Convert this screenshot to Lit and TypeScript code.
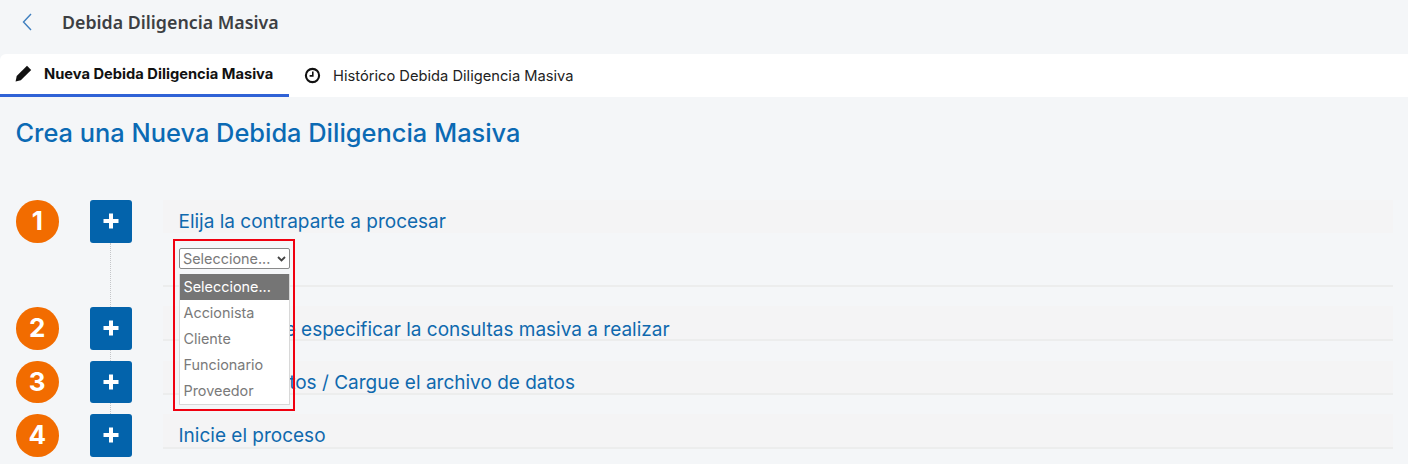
import { LitElement, html, css } from "lit";
import { customElement } from "lit/decorators.js";

const OPTIONS = ["Seleccione...", "Accionista", "Cliente", "Funcionario", "Proveedor"];

const STEPS = [
  { n: 1, title: "Elija la contraparte a procesar" },
  { n: 2, title: "Elija y detalle especificar la consultas masiva a realizar" },
  { n: 3, title: "Digite los datos / Cargue el archivo de datos" },
  { n: 4, title: "Inicie el proceso" },
];

@customElement("app-root")
export class AppRoot extends LitElement {
  static override styles = css`
    :host {
      display: block;
      width: 1408px;
      height: 464px;
      overflow: hidden;
      background: #f4f6f8;
      font-family: Inter, "Liberation Sans", sans-serif;
    }

    .topbar {
      display: flex;
      align-items: center;
      height: 54px;
      padding: 0 0 10px 21px;
      box-sizing: border-box;
    }

    .back {
      display: block;
      width: 12px;
      height: 20px;
      margin-right: 29px;
    }

    .page-title {
      font-family: "Noto Sans", sans-serif;
      font-size: 17.8px;
      font-weight: 600;
      color: #3d3f43;
    }

    .tabs {
      display: flex;
      height: 43px;
      background: #fff;
      border-top-left-radius: 6px;
    }

    .tab {
      display: flex;
      align-items: center;
      box-sizing: border-box;
      height: 43px;
      font-size: 14.7px;
      color: #222;
    }

    .tab.active {
      width: 289px;
      padding: 0 0 1px 15px;
      border-bottom: 3px solid #2f62d6;
      font-weight: 700;
      color: #111;
    }

    .tab.other {
      padding-left: 15px;
    }

    .tab svg {
      display: block;
      width: 17px;
      height: 17px;
      margin-right: 12px;
    }

    h1 {
      margin: 0;
      height: 103px;
      padding: 21px 0 0 15.5px;
      box-sizing: border-box;
      font-size: 25.4px;
      line-height: 29px;
      font-weight: 500;
      color: #0b6ab4;
    }

    .steps {
      display: flex;
      flex-direction: column;
      padding: 0 15px 0 16px;
    }

    .step {
      display: flex;
    }

    .step.s1 {
      height: 107px;
    }

    .step.s2,
    .step.s3 {
      height: 53.5px;
    }

    .num {
      flex: none;
      width: 42.5px;
      height: 42.5px;
      margin-right: 31px;
      border-radius: 50%;
      background: #f26c00;
      color: #fff;
      font-size: 26px;
      font-weight: 700;
      line-height: 42.5px;
      text-align: center;
    }

    .rail {
      flex: none;
      display: flex;
      flex-direction: column;
      align-items: center;
      width: 42.5px;
      margin-right: 31px;
    }

    .plus {
      flex: none;
      display: flex;
      align-items: center;
      justify-content: center;
      width: 42.5px;
      height: 42.5px;
      border-radius: 3px;
      background: #0363ab;
    }

    .plus svg {
      display: block;
      width: 18px;
      height: 18px;
    }

    .line {
      flex: 1;
      border-left: 1.5px dotted #c4c6c9;
    }

    .panel {
      flex: 1;
      align-self: flex-start;
      border-bottom: 2px solid #eceded;
    }

    .s1 .panel {
      height: 85px;
    }

    .s2 .panel {
      margin-top: -1px;
    }

    .head {
      box-sizing: border-box;
      height: 32.5px;
      padding: 10px 0 0 15.5px;
      background: #f4f4f5;
      font-size: 19px;
      line-height: 24px;
      color: #0f69ae;
      white-space: nowrap;
    }

    .s1 .head {
      height: 33px;
    }

    .s2 .head {
      padding-top: 11.5px;
    }

    .body {
      position: relative;
      height: 52px;
    }

    .select {
      position: absolute;
      left: 15.5px;
      top: 15px;
      display: flex;
      align-items: center;
      justify-content: space-between;
      box-sizing: border-box;
      width: 111px;
      height: 21px;
      padding: 0 3px 0 3.5px;
      border: 1px solid #8a8a8a;
      border-radius: 2px;
      background: #fff;
      font-size: 14.4px;
      color: #7a7a7a;
    }

    .select svg {
      display: block;
      width: 9px;
      height: 6px;
    }

    .list {
      position: absolute;
      left: 16px;
      top: 41px;
      z-index: 2;
      box-sizing: border-box;
      width: 111px;
      height: 131px;
      background: #fff;
      border: 1px solid #d8d8d8;
      border-top: none;
      font-size: 14.4px;
      color: #7a7a7a;
    }

    .option {
      height: 26px;
      padding-left: 3.5px;
      line-height: 26px;
    }

    .option.selected {
      background: #757575;
      color: #fff;
    }

    .mark {
      position: absolute;
      left: 9.7px;
      top: 6px;
      z-index: 3;
      box-sizing: border-box;
      width: 122px;
      height: 172px;
      border: 2px solid #f0000f;
      pointer-events: none;
    }
  `;

  private _renderPanelBody() {
    return html`
      <div class="body">
        <div class="select">
          <span>Seleccione...</span>
          <svg viewBox="0 0 9 6" fill="none" stroke="#444" stroke-width="1.8">
            <path d="M1 1l3.500 3.500L8 1" />
          </svg>
        </div>
        <div class="list">
          ${OPTIONS.map(
            (o, i) => html`<div class="option ${i === 0 ? "selected" : ""}">${o}</div>`,
          )}
        </div>
        <div class="mark"></div>
      </div>
    `;
  }

  override render() {
    return html`
      <div class="topbar">
        <svg class="back" viewBox="0 0 12 20" fill="none" stroke="#3f7fbf" stroke-width="1.4">
          <path d="M10 2L2.500 10l7.500 8" />
        </svg>
        <span class="page-title">Debida Diligencia Masiva</span>
      </div>

      <div class="tabs">
        <div class="tab active">
          <svg viewBox="0 0 17 17" fill="#111">
            <path d="M12 .8l4.200 4.200L5.800 15.300.6 16.400l1.100-5.300z" />
          </svg>
          Nueva Debida Diligencia Masiva
        </div>
        <div class="tab other">
          <svg viewBox="0 0 17 17" fill="none" stroke="#111">
            <circle cx="8.5" cy="8.5" r="6.6" stroke-width="2.1" />
            <path d="M8.800 4.600v4.300H5.600" stroke-width="1.6" />
          </svg>
          Histórico Debida Diligencia Masiva
        </div>
      </div>

      <h1>Crea una Nueva Debida Diligencia Masiva</h1>

      <div class="steps">
        ${STEPS.map(
          (s) => html`
            <div class="step s${s.n}">
              <div class="num">${s.n}</div>
              <div class="rail">
                <div class="plus">
                  <svg viewBox="0 0 18 18" fill="#fff">
                    <path d="M7 1.500h4V7h5.500v4H11v5.500H7V11H1.500V7H7z" />
                  </svg>
                </div>
                ${s.n < 4 ? html`<div class="line"></div>` : ""}
              </div>
              <div class="panel">
                <div class="head">${s.title}</div>
                ${s.n === 1 ? this._renderPanelBody() : ""}
              </div>
            </div>
          `,
        )}
      </div>
    `;
  }
}

declare global {
  interface HTMLElementTagNameMap {
    "app-root": AppRoot;
  }
}
